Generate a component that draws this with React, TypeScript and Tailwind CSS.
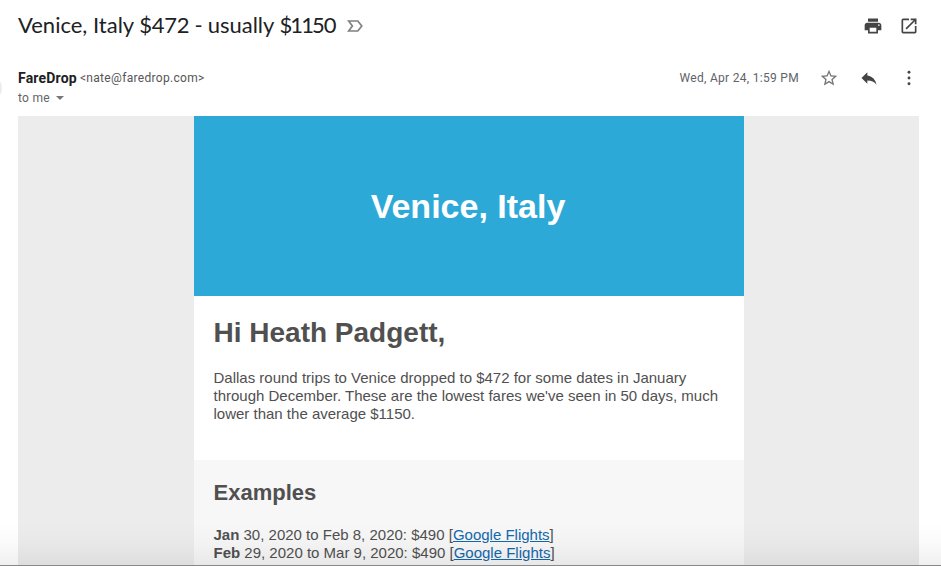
import { MdPrint, MdOpenInNew, MdStarBorder, MdReply } from "react-icons/md";

const examples = [
  { month: "Jan", rest: " 30, 2020 to Feb 8, 2020: $490 [" },
  { month: "Feb", rest: " 29, 2020 to Mar 9, 2020: $490 [" },
];

function ImportanceMarker() {
  return (
    <svg className="ml-[12px] h-[12px] w-[16px]" viewBox="0 0 16 12" fill="none" stroke="#808080" strokeWidth="1.7">
      <path d="M1.6 1H10.8L14.8 6L10.8 11H1.6L5.4 6Z" />
    </svg>
  );
}

function MoreDots() {
  return (
    <svg className="ml-[20px] h-5 w-5" viewBox="0 0 20 20" fill="#444">
      <circle cx="10" cy="4.3" r="1.45" />
      <circle cx="10" cy="10" r="1.45" />
      <circle cx="10" cy="15.7" r="1.45" />
    </svg>
  );
}

function Header() {
  return (
    <header className="flex h-[116px] flex-col font-['Roboto',sans-serif]">
      <div className="flex h-[52px] items-center pl-[18px] pr-[22px]">
        <h1 className="whitespace-nowrap pb-[2px] font-['Lato',sans-serif] text-[22px] leading-7 text-[#202124]">
          Venice, Italy <span className="tracking-[-0.3px]">$472 - </span>usually{" "}
          <span className="tracking-[-1.9px]">$11</span><span className="tracking-[-1.1px]">50</span>
        </h1>
        <ImportanceMarker />
        <div className="ml-auto flex gap-4 text-[#444]">
          <MdPrint size={20} />
          <MdOpenInNew size={20} />
        </div>
      </div>
      <div className="flex pt-[16px]">
        <div className="mt-[8px] h-[24px] w-[3px] overflow-hidden">
          <div className="-ml-[22px] h-[24px] w-[24px] rounded-full bg-[#ebebeb]" />
        </div>
        <div className="ml-[15px] flex flex-col">
          <div className="flex h-5 items-center whitespace-nowrap">
            <span className="text-[14px] font-bold tracking-[0.2px] text-[#202124]">FareDrop</span>
            <span className="ml-[3px] text-[12px] tracking-[0.32px] text-[#555]">&lt;nate@faredrop.com&gt;</span>
          </div>
          <div className="flex h-5 items-center text-[12px] tracking-[0.3px] text-[#5f6368]">
            to me
            <svg className="ml-[6px] h-[4px] w-[8px]" viewBox="0 0 8 4" fill="#777">
              <path d="M0 0H8L4 4Z" />
            </svg>
          </div>
        </div>
        <div className="ml-auto flex h-5 items-center pr-[22px] text-[#444]">
          <span className="whitespace-nowrap text-[12px] tracking-[0.3px] text-[#5f6368]">Wed, Apr 24, 1:59 PM</span>
          <MdStarBorder size={20} className="ml-[20px] text-[#777]" />
          <MdReply size={20} className="ml-[20px]" />
          <MoreDots />
        </div>
      </div>
    </header>
  );
}

export default function App() {
  return (
    <div className="relative h-[566px] w-[941px] overflow-hidden bg-white">
      <Header />
      <main className="ml-[18px] flex h-[450px] w-[901px] bg-[#ececec] pl-[176px] font-['Liberation_Sans',Arial,sans-serif] text-[#505050]">
        <div className="w-[550px]">
          <div className="flex h-[180px] items-center justify-center bg-[#2da9d8]">
            <h2 className="whitespace-nowrap pr-[2px] text-[34px] font-bold leading-10 text-white">Venice, Italy</h2>
          </div>
          <section className="h-[164px] bg-white pl-[19.5px] pt-[21px]">
            <h3 className="whitespace-nowrap text-[28px] font-bold leading-8">Hi Heath Padgett,</h3>
            <p className="mt-[20px] whitespace-nowrap text-[15px] leading-[18px]">
              Dallas round trips to Venice dropped to $472 for some dates in January
              <br />
              through December. These are the lowest fares we've seen in 50 days, much
              <br />
              lower than the average $1150.
            </p>
          </section>
          <section className="h-[106px] bg-[#f7f7f7] pl-[19.5px] pt-[21px]">
            <h4 className="text-[22px] font-bold leading-6">Examples</h4>
            <div className="mt-[21px] whitespace-nowrap text-[15px] leading-[18px]">
              {examples.map((e) => (
                <p key={e.month}>
                  <b>{e.month}</b>
                  {e.rest}
                  <a className="text-[#1169ae] underline">Google Flights</a>]
                </p>
              ))}
            </div>
          </section>
        </div>
      </main>
      <div className="pointer-events-none absolute inset-x-0 bottom-0 h-[42px] border-b border-[#888] bg-linear-to-b from-transparent via-black/2 to-black/6" />
    </div>
  );
}
